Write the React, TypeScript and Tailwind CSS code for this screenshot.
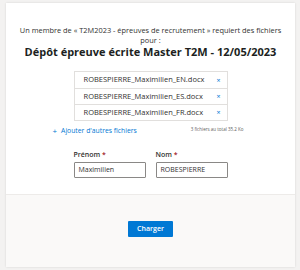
import React from 'react';

const files = [
  'ROBESPIERRE_Maximilien_EN.docx',
  'ROBESPIERRE_Maximilien_ES.docx',
  'ROBESPIERRE_Maximilien_FR.docx',
];

export default function App() {
  return (
    <div
      className="w-[300px] h-[270px] bg-[#f3f2f1] pt-[3px] pl-[6px]"
      style={{ fontFamily: '"Open Sans", "Noto Sans", sans-serif' }}
    >
      <div className="w-[289px] h-[264px] bg-white shadow-[0_0_2px_rgba(0,0,0,0.12)] flex flex-col">
        {/* Upload request */}
        <div className="h-[191px] flex flex-col items-center pt-[22px]">
          <p className="text-[7.4px] leading-[10px] text-[#323130] text-center w-[262px]">
            Un membre de « T2M2023 - épreuves de recrutement » requiert des fichiers pour :
          </p>
          <h1 className="w-[252px] truncate text-center text-[11px] leading-[14px] font-bold text-[#201f1e]">
            Dépôt épreuve écrite Master T2M - 12/05/2023
          </h1>

          <div className="mt-[12px] w-[154px] border border-[#e1dfdd]">
            {files.map((f, i) => (
              <div
                key={f}
                className={`h-[16px] flex items-center justify-between pl-[9px] pr-[6px] ${i > 0 ? 'border-t border-[#e1dfdd]' : ''}`}
              >
                <span className="text-[7.5px] text-[#323130]">{f}</span>
                <span className="text-[7px] text-[#0078d4] leading-none">×</span>
              </div>
            ))}
          </div>

          <div className="mt-[5px] h-[10px] w-[196px] flex items-center justify-between pr-[5px]">
            <div className="flex items-center gap-[4px] text-[#0078d4]">
              <span className="text-[8px] leading-none">+</span>
              <span className="text-[6.8px]">Ajouter d'autres fichiers</span>
            </div>
            <span className="text-[4.5px] text-[#605e5c] -mt-[4px]">3 fichiers au total 35.2 Ko</span>
          </div>

          <div className="mt-[14px] w-[154px] flex gap-[10px]">
            <div className="flex-1 flex flex-col">
              <label className="text-[7px] font-semibold text-[#323130] leading-[9px]">
                Prénom <span className="text-[#a4262c]">*</span>
              </label>
              <div className="mt-[3px] h-[16px] border border-[#8a8886] rounded-[1px] flex items-center px-[4px] text-[7px] text-[#323130]">
                Maximilien
              </div>
            </div>
            <div className="flex-1 flex flex-col">
              <label className="text-[7px] font-semibold text-[#323130] leading-[9px]">
                Nom <span className="text-[#a4262c]">*</span>
              </label>
              <div className="mt-[3px] h-[16px] border border-[#8a8886] rounded-[1px] flex items-center px-[4px] text-[7px] text-[#323130]">
                ROBESPIERRE
              </div>
            </div>
          </div>
        </div>

        {/* Footer */}
        <div className="flex-1 bg-[#faf9f8] border-t border-[#edebe9] flex items-center justify-center pb-[4px]">
          <button className="w-[45px] h-[16px] bg-[#0078d4] text-white text-[7px] font-semibold rounded-[1px]">
            Charger
          </button>
        </div>
      </div>
    </div>
  );
}
